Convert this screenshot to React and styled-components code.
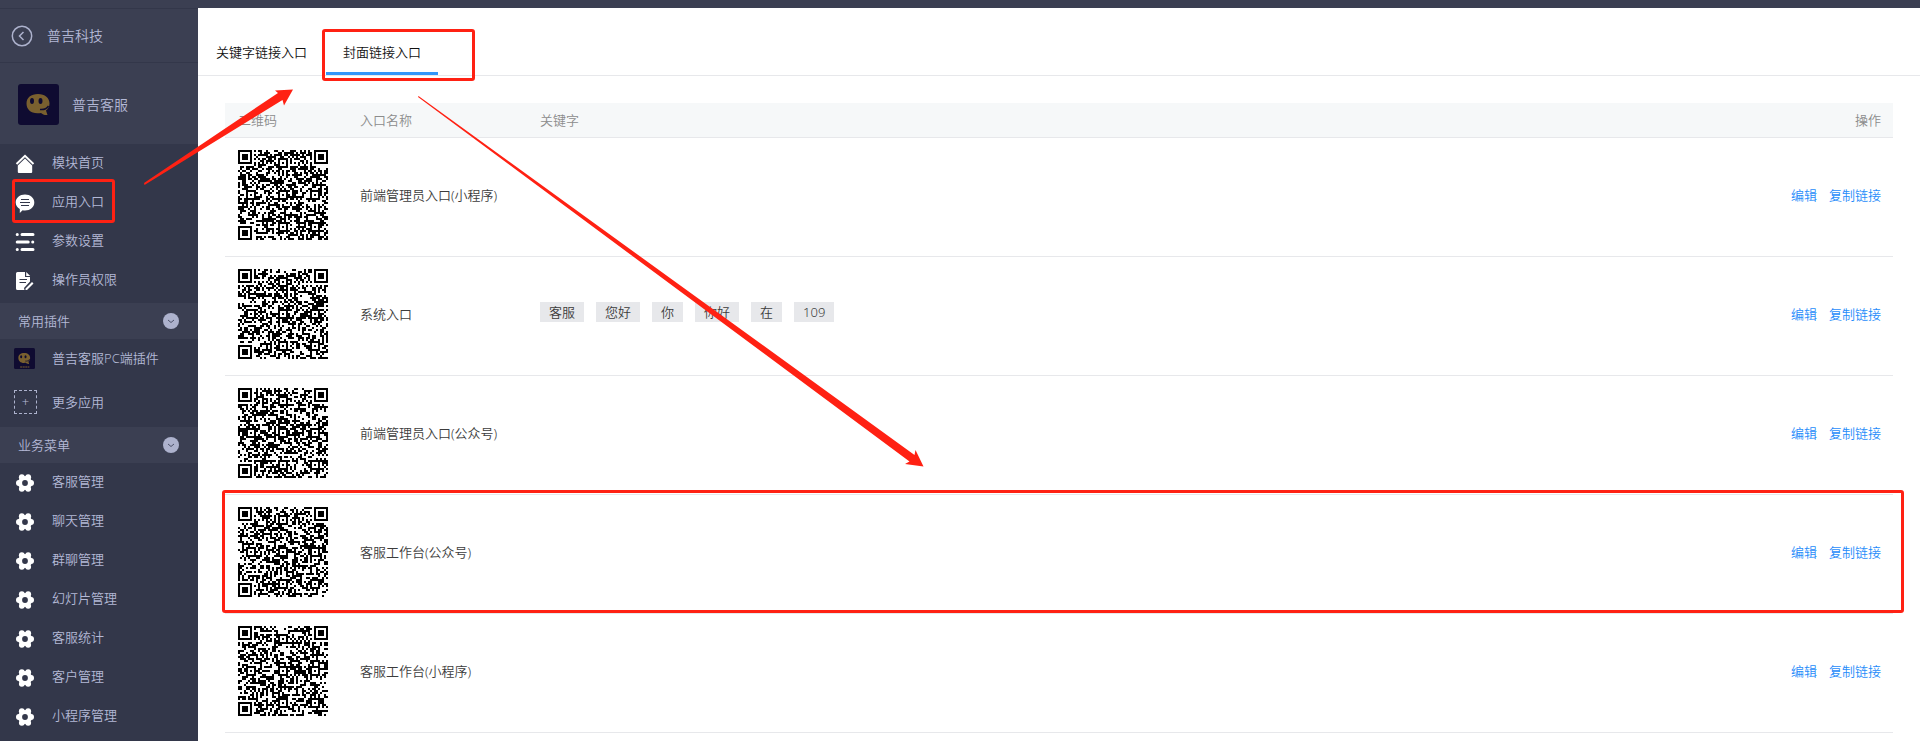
import React from "react";
import styled, { createGlobalStyle } from "styled-components";

const GlobalStyle = createGlobalStyle`
  * {
    box-sizing: border-box;
  }
  body {
    margin: 0;
    background: #fff;
    color: #333;
    font-family: "Noto Sans", "Noto Sans CJK SC", sans-serif;
    font-size: 13px;
    font-weight: 350;
    line-height: 20px;
  }
  a {
    color: inherit;
    text-decoration: none;
  }
`;

const modules = [
  { icon: "home", label: "模块首页" },
  { icon: "chat", label: "应用入口", marked: true },
  { icon: "list", label: "参数设置" },
  { icon: "doc", label: "操作员权限" },
];

const business = [
  "客服管理",
  "聊天管理",
  "群聊管理",
  "幻灯片管理",
  "客服统计",
  "客户管理",
  "小程序管理",
];

const entries = [
  { name: "前端管理员入口(小程序)", words: [] },
  { name: "系统入口", words: ["客服", "您好", "你", "你好", "在", "109"] },
  { name: "前端管理员入口(公众号)", words: [] },
  { name: "客服工作台(公众号)", words: [], marked: true },
  { name: "客服工作台(小程序)", words: [] },
];

const QR_SIZE = 45;

const ring = (x, y, cx, cy) => Math.max(Math.abs(x - cx), Math.abs(y - cy));

const qrPath = (seed) => {
  let state = seed * 7919 + 17;
  const next = () => {
    state = (state * 1103515245 + 12345) % 2147483648;
    return state / 2147483648;
  };
  const corners = [
    [3, 3],
    [QR_SIZE - 4, 3],
    [3, QR_SIZE - 4],
  ];
  const dots = [
    [22, 6],
    [6, 22],
    [22, 22],
    [38, 22],
    [22, 38],
    [38, 38],
  ];
  let d = "";
  for (let y = 0; y < QR_SIZE; y++) {
    for (let x = 0; x < QR_SIZE; x++) {
      let dark = next() < 0.5;
      if (x === 6 || y === 6) dark = (x + y) % 2 === 0;
      dots.forEach(([cx, cy]) => {
        const r = ring(x, y, cx, cy);
        if (r < 3) dark = r !== 1;
      });
      corners.forEach(([cx, cy]) => {
        const r = ring(x, y, cx, cy);
        if (r < 5) dark = r < 2 || r === 3;
      });
      if (dark) d += `M${x} ${y}h1v1h-1z`;
    }
  }
  return d;
};

const QrCode = ({ seed }) => (
  <QrImage viewBox="0 0 45 45" shapeRendering="crispEdges" role="img" aria-label="二维码">
    <path d={qrPath(seed)} />
  </QrImage>
);

const Gear = () => (
  <svg width="20" height="20" viewBox="0 0 20 20">
    <g fill="#fff">
      <circle cx="10" cy="10" r="7" />
      <circle cx="3.9" cy="10" r="2.9" />
      <circle cx="16.1" cy="10" r="2.9" />
      <circle cx="6.8" cy="4.2" r="2.9" />
      <circle cx="13.2" cy="4.2" r="2.9" />
      <circle cx="6.8" cy="15.8" r="2.9" />
      <circle cx="13.2" cy="15.8" r="2.9" />
    </g>
    <circle cx="10" cy="10" r="2.9" fill="#33374a" />
  </svg>
);

const Icon = ({ name }) => {
  if (name === "home") {
    return (
      <svg width="20" height="20" viewBox="0 0 20 20">
        <path d="M1.500 10L10 1.800l8.500 8.200" fill="none" stroke="#fff" strokeWidth="2" />
        <path d="M10 4.600l7.200 7V18q0 1-1 1H3.800q-1 0-1-1v-6.400z" fill="#fff" />
      </svg>
    );
  }
  if (name === "chat") {
    return (
      <svg width="20" height="20" viewBox="0 0 20 20">
        <path
          d="M10 1.500c5.200 0 9.300 3.500 9.300 8s-4.100 8-9.300 8c-1 0-1.600 0-2.400-.3L4.800 20v-4C2.300 14.600.7 12.300.7 9.500c0-4.500 4.100-8 9.300-8z"
          fill="#fff"
        />
        <path d="M6 6.500h8M5 9.500h10M6 12.500h8" stroke="#33374a" />
      </svg>
    );
  }
  if (name === "list") {
    return (
      <svg width="20" height="20" viewBox="0 0 20 20">
        <g stroke="#fff" strokeWidth="3" strokeLinecap="round">
          <path d="M2.200 2.500h.1M7 2.500h11M2.200 10h11M17.700 10h.1M2.200 17.500h.1M7 17.500h11" />
        </g>
      </svg>
    );
  }
  return (
    <svg width="20" height="20" viewBox="0 0 20 20">
      <path
        d="M2.500 1H10v5h5v4.500L9 17l.5 2h-7Q1 19 1 17.500v-15Q1 1 2.500 1z"
        fill="#fff"
      />
      <path d="M11.200 1l4 4h-4zM10.500 17.500l6.500-6.500 1.500 1.500-6.500 6.500h-1.500z" fill="#fff" />
      <path d="M4.500 8.500H12M4.500 11.500H11" stroke="#33374a" />
    </svg>
  );
};

const Logo = ({ size, caption }) => (
  <svg width={size} height={size} viewBox="0 0 41 41">
    <rect width="41" height="41" rx="3" fill="#0f0b31" />
    <path
      d="M20 10c7 0 11.500 4 11.500 9.500 0 3-1.500 5.500-3.500 7l1.500 4.500c-3 .3-5-.7-6.500-2-1 .2-2 .2-3.500.2-7 0-11-4-11-9.700S13 10 20 10z"
      fill="#7a602f"
    />
    <ellipse cx="14" cy="17" rx="2" ry="3" fill="#0f0b31" />
    <ellipse cx="22.500" cy="17" rx="2" ry="3" fill="#0f0b31" />
    <path d="M22 25.500c4 .5 6.500-.5 8.500-3.500" fill="none" stroke="#0f0b31" strokeWidth="1.500" />
    {caption && <path d="M12 37h18" stroke="#7a602f" strokeWidth="2" strokeDasharray="4 1" />}
  </svg>
);

const Chevron = () => (
  <svg width="16" height="16" viewBox="0 0 16 16">
    <circle cx="8" cy="8" r="8" fill="#adb2cd" />
    <path d="M5 7l3 2.500L11 7" fill="none" stroke="#4b5068" />
  </svg>
);

const App = () => {
  return (
    <>
      <GlobalStyle />
      <Page>
        <TopBar />
        <Body>
          <Sidebar>
            <BackLink href="#">
              <svg width="22" height="22" viewBox="0 0 22 22" fill="none" stroke="#adb2cd">
                <circle cx="11" cy="11" r="9.700" strokeWidth="1.500" />
                <path d="M12.500 7L8.500 11l4 4" strokeWidth="1.500" />
              </svg>
              普吉科技
            </BackLink>
            <Brand>
              <Logo size={41} />
              普吉客服
            </Brand>
            <nav>
              <NavGroup>
                {modules.map((item) => (
                  <NavItem href="#" key={item.label}>
                    <Icon name={item.icon} />
                    {item.label}
                    {item.marked && <NavMark />}
                  </NavItem>
                ))}
              </NavGroup>
              <GroupButton type="button">
                常用插件
                <Chevron />
              </GroupButton>
              <PluginItem href="#">
                <IconSlot>
                  <Logo size={21} caption />
                </IconSlot>
                普吉客服PC端插件
              </PluginItem>
              <PluginItem href="#">
                <IconSlot>
                  <AddBox>+</AddBox>
                </IconSlot>
                更多应用
              </PluginItem>
              <GroupButton type="button">
                业务菜单
                <Chevron />
              </GroupButton>
              <NavGroup>
                {business.map((label) => (
                  <NavItem href="#" key={label}>
                    <Gear />
                    {label}
                  </NavItem>
                ))}
              </NavGroup>
            </nav>
          </Sidebar>
          <Main>
            <Tabs>
              <Tab type="button">关键字链接入口</Tab>
              <Tab type="button" $active>
                封面链接入口
                <TabMark />
              </Tab>
            </Tabs>
            <TableWrapper>
              <Table>
                <thead>
                  <tr>
                    <Th $width="122px">二维码</Th>
                    <Th $width="180px">入口名称</Th>
                    <Th>关键字</Th>
                    <Th $width="180px" $right>
                      操作
                    </Th>
                  </tr>
                </thead>
                <tbody>
                  {entries.map((entry, index) => (
                    <Row key={entry.name}>
                      <Td>
                        <QrCode seed={index + 1} />
                        {entry.marked && <RowMark />}
                      </Td>
                      <Td>{entry.name}</Td>
                      <Td>
                        <Words>
                          {entry.words.map((word) => (
                            <Word key={word}>{word}</Word>
                          ))}
                        </Words>
                      </Td>
                      <Td>
                        <Actions>
                          <a href="#">编辑</a>
                          <a href="#">复制链接</a>
                        </Actions>
                      </Td>
                    </Row>
                  ))}
                </tbody>
              </Table>
            </TableWrapper>
          </Main>
        </Body>
        <Arrows width="1000" height="500" viewBox="0 0 1000 500" fill="#ff2113">
          <path d="M144 183L278 93l-3-2.500 18-1-9 16-1.500-5.500L144.500 185z" />
          <path d="M418.500 96L914.500 455l1-5 8 16.500-18.500-2.500 4.500-2.500L418 97z" />
        </Arrows>
      </Page>
    </>
  );
};

export default App;

const Page = styled.div`
  position: relative;
  display: flex;
  flex-direction: column;
  height: 100vh;
  overflow: hidden;
`;

const TopBar = styled.header`
  flex: none;
  height: 8px;
  background: #3b3f52;
`;

const Body = styled.div`
  display: flex;
  flex: 1;
  min-height: 0;
`;

const Sidebar = styled.aside`
  flex: none;
  width: 198px;
  background: #33374a;
  color: #b4b9d6;
`;

const BackLink = styled.a`
  display: flex;
  align-items: center;
  gap: 14px;
  height: 55px;
  padding-left: 11px;
  border-top: 1px solid #33374a;
  border-bottom: 1px solid #33374a;
  background: #3b3f52;
  font-size: 14px;
`;

const Brand = styled.div`
  display: flex;
  align-items: center;
  gap: 13px;
  height: 81px;
  padding: 2px 0 0 18px;
  background: #3b3f52;
  font-size: 14px;
`;

const NavGroup = styled.div`
  padding-bottom: 3px;
`;

const NavItem = styled.a`
  position: relative;
  display: flex;
  align-items: center;
  gap: 17px;
  height: 39px;
  padding: 0 0 3px 15px;
  svg {
    margin-top: 4px;
  }
`;

const PluginItem = styled.a`
  display: flex;
  align-items: center;
  gap: 15px;
  height: 44px;
  padding: 0 0 6px 14px;
`;

const IconSlot = styled.span`
  display: flex;
  width: 23px;
`;

const AddBox = styled.span`
  display: flex;
  align-items: center;
  justify-content: center;
  width: 23px;
  height: 24px;
  border: 1px dashed #adb2cd;
`;

const GroupButton = styled.button`
  display: flex;
  align-items: center;
  justify-content: space-between;
  width: 100%;
  height: 36px;
  padding: 0 19px 0 18px;
  border: none;
  background: #3b3f52;
  color: inherit;
  font: inherit;
`;

const Main = styled.main`
  flex: 1;
  min-width: 0;
`;

const Tabs = styled.div`
  display: flex;
  gap: 2px;
  height: 68px;
  padding-left: 1px;
  border-bottom: 1px solid #e7e8eb;
`;

const Tab = styled.button`
  position: relative;
  padding: 34px 17px 10px;
  border: none;
  border-bottom: 3px solid ${({ $active }) => ($active ? "#3296fa" : "transparent")};
  background: none;
  color: #111;
  font: inherit;
`;

const TableWrapper = styled.div`
  padding: 27px 27px 0;
`;

const Table = styled.table`
  width: 100%;
  border-collapse: separate;
  border-spacing: 0;
  table-layout: fixed;
`;

const Th = styled.th`
  width: ${({ $width }) => $width || "auto"};
  height: 35px;
  padding: 0 12px 0 13px;
  border-bottom: 1px solid #e7e8eb;
  background: #f6f8f9;
  color: #8c8c8c;
  font-weight: 350;
  text-align: ${({ $right }) => ($right ? "right" : "left")};
`;

const Row = styled.tr`
  position: relative;
`;

const Td = styled.td`
  height: 119px;
  padding: 0 12px 4px 13px;
  border-bottom: 1px solid #e7e8eb;
  color: #3c3c3c;
  white-space: nowrap;
`;

const QrImage = styled.svg`
  display: block;
  width: 90px;
  height: 90px;
`;

const Words = styled.div`
  display: flex;
  gap: 12px;
  padding-bottom: 4px;
`;

const Word = styled.span`
  padding: 0 9px;
  background: #e7e8eb;
`;

const Actions = styled.div`
  display: flex;
  justify-content: flex-end;
  gap: 12px;
  color: #1f8cfa;
`;

const Mark = styled.span`
  position: absolute;
  z-index: 1;
  border: 3px solid #ff2113;
  border-radius: 3px;
  pointer-events: none;
`;

const NavMark = styled(Mark)`
  top: -4px;
  left: 12px;
  width: 103px;
  height: 44px;
`;

const TabMark = styled(Mark)`
  top: 21px;
  left: -4px;
  width: 153px;
  height: 52px;
`;

const RowMark = styled(Mark)`
  top: -5px;
  right: -11px;
  bottom: 1px;
  left: -3px;
`;

const Arrows = styled.svg`
  position: absolute;
  top: 0;
  left: 0;
  z-index: 2;
  pointer-events: none;
`;
